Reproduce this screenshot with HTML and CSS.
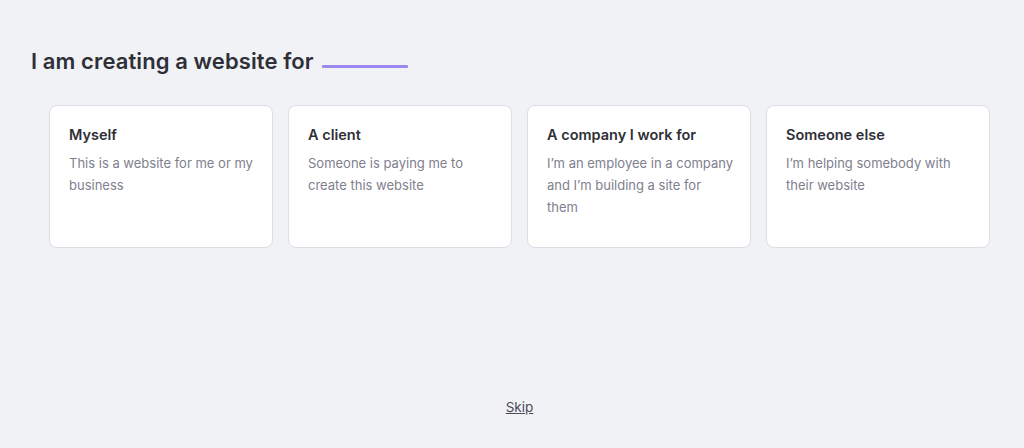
FILE: index.html
```html
<!DOCTYPE html>
<html lang="en">
<head>
<meta charset="utf-8">
<link rel="stylesheet" href="styles.css">
</head>
<body>
<main class="page">
  <h1 class="title">I am creating a website for <span class="blank"></span></h1>
  <div class="cards">
    <div class="card">
      <div class="card-title">Myself</div>
      <div class="card-desc">This is a website for me or my business</div>
    </div>
    <div class="card">
      <div class="card-title">A client</div>
      <div class="card-desc">Someone is paying me to create this website</div>
    </div>
    <div class="card">
      <div class="card-title">A company I work for</div>
      <div class="card-desc">I’m an employee in a company and I’m building a site for them</div>
    </div>
    <div class="card">
      <div class="card-title">Someone else</div>
      <div class="card-desc">I’m helping somebody with their website</div>
    </div>
  </div>
  <div class="footer"><a class="skip" href="#">Skip</a></div>
</main>
</body>
</html>
```
FILE: styles.css
```css
* { box-sizing: border-box; }
html, body { margin: 0; padding: 0; }
body {
  background: #f1f2f6;
  font-family: Inter, "Noto Sans", sans-serif;
  color: #36344d;
}
.page {
  height: 448px;
  display: flex;
  flex-direction: column;
  padding: 46px 34px 32px 31px;
}
.title {
  margin: 0;
  font-size: 22px;
  font-weight: 600;
  line-height: 30px;
  color: #2f2f37;
  display: flex;
  align-items: center;
  letter-spacing: 0.1px;
}
.blank {
  display: inline-block;
  width: 86px;
  height: 3px;
  background: #9b87ee;
  margin-left: 8px;
  margin-top: 10px;
  border-radius: 1px;
}
.cards {
  display: grid;
  grid-template-columns: repeat(4, 1fr);
  gap: 15px;
  margin-top: 29px;
  margin-left: 18px;
}
.card {
  background: #fff;
  border: 1px solid #dedfe6;
  border-radius: 8px;
  height: 143px;
  padding: 19px 16px 19px 19px;
}
.card-title {
  font-size: 14.5px;
  font-weight: 600;
  color: #2f2f37;
  line-height: 20px;
}
.card-desc {
  margin-top: 7px;
  font-size: 13px;
  line-height: 22px;
  color: #80808e;
}
.footer {
  margin-top: auto;
  text-align: center;
  padding-left: 18px;
}
.skip {
  font-size: 13.5px;
  color: #4a4a58;
  text-decoration: underline;
}
```
